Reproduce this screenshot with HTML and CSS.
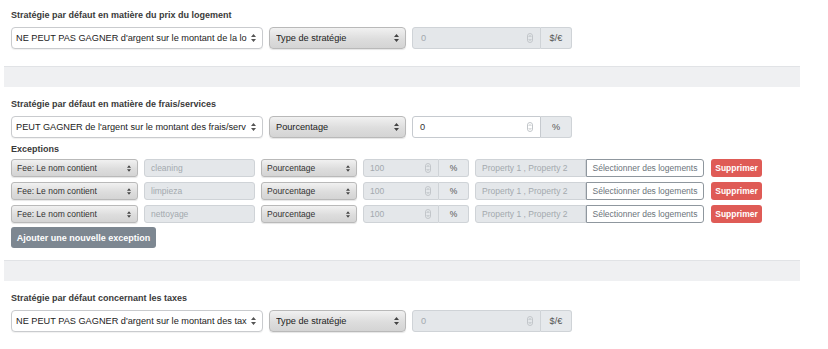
FILE: index.html
```html
<!DOCTYPE html>
<html lang="fr">
<head>
<meta charset="utf-8">
<title>Stratégies</title>
<link rel="stylesheet" href="styles.css">
</head>
<body>
<div class="page">
  <section class="section first">
    <h3 class="title">Stratégie par défaut en matière du prix du logement</h3>
    <div class="row">
      <div class="sel sel-white w-main">
        <span class="sel-text">NE PEUT PAS GAGNER d'argent sur le montant de la lo</span>
        <svg class="arr" width="5" height="8" viewBox="0 0 5 8"><path d="M2.5 0 L5 3 H0 Z M2.5 8 L5 5 H0 Z" fill="#555"/></svg>
      </div>
      <div class="sel sel-gray w-type">
        <span class="sel-text">Type de stratégie</span>
        <svg class="arr" width="5" height="8" viewBox="0 0 5 8"><path d="M2.5 0 L5 3 H0 Z M2.5 8 L5 5 H0 Z" fill="#444"/></svg>
      </div>
      <div class="group w-group">
        <div class="num num-dis">
          <span class="ph">0</span>
          <svg class="spin" width="6" height="10" viewBox="0 0 6 10"><rect x="0.5" y="0.5" width="5" height="9" rx="2.5" fill="none" stroke="#c2c6ca"/><path d="M1.8 3.8 L3 2.6 L4.2 3.8 M1.8 6.2 L3 7.4 L4.2 6.2" fill="none" stroke="#9aa0a6" stroke-width="0.7"/></svg>
        </div>
        <div class="addon">$/€</div>
      </div>
    </div>
  </section>

  <div class="band"></div>

  <section class="section">
    <h3 class="title">Stratégie par défaut en matière de frais/services</h3>
    <div class="row">
      <div class="sel sel-white w-main">
        <span class="sel-text">PEUT GAGNER de l'argent sur le montant des frais/serv</span>
        <svg class="arr" width="5" height="8" viewBox="0 0 5 8"><path d="M2.5 0 L5 3 H0 Z M2.5 8 L5 5 H0 Z" fill="#555"/></svg>
      </div>
      <div class="sel sel-gray w-type">
        <span class="sel-text">Pourcentage</span>
        <svg class="arr" width="5" height="8" viewBox="0 0 5 8"><path d="M2.5 0 L5 3 H0 Z M2.5 8 L5 5 H0 Z" fill="#444"/></svg>
      </div>
      <div class="group w-group">
        <div class="num num-on">
          <span class="val">0</span>
          <svg class="spin" width="6" height="10" viewBox="0 0 6 10"><rect x="0.5" y="0.5" width="5" height="9" rx="2.5" fill="none" stroke="#c2c6ca"/><path d="M1.8 3.8 L3 2.6 L4.2 3.8 M1.8 6.2 L3 7.4 L4.2 6.2" fill="none" stroke="#9aa0a6" stroke-width="0.7"/></svg>
        </div>
        <div class="addon">%</div>
      </div>
    </div>

    <div class="exc-label">Exceptions</div>

    <div class="exc-list">
      <div class="exc-row">
        <div class="sel sel-gray sm w-fee"><span class="sel-text">Fee: Le nom contient</span><svg class="arr" width="4" height="7" viewBox="0 0 5 8"><path d="M2.5 0 L5 3 H0 Z M2.5 8 L5 5 H0 Z" fill="#444"/></svg></div>
        <div class="txt-dis w-name">cleaning</div>
        <div class="sel sel-gray sm w-pct"><span class="sel-text">Pourcentage</span><svg class="arr" width="4" height="7" viewBox="0 0 5 8"><path d="M2.5 0 L5 3 H0 Z M2.5 8 L5 5 H0 Z" fill="#444"/></svg></div>
        <div class="group sm w-sgroup">
          <div class="num num-dis sm"><span class="ph">100</span><svg class="spin" width="6" height="10" viewBox="0 0 6 10"><rect x="0.5" y="0.5" width="5" height="9" rx="2.5" fill="none" stroke="#c2c6ca"/><path d="M1.8 3.8 L3 2.6 L4.2 3.8 M1.8 6.2 L3 7.4 L4.2 6.2" fill="none" stroke="#9aa0a6" stroke-width="0.7"/></svg></div>
          <div class="addon sm">%</div>
        </div>
        <div class="group sm">
          <div class="txt-dis joined w-prop">Property 1 , Property 2</div>
          <button class="btn-pick">Sélectionner des logements</button>
        </div>
        <button class="btn-del">Supprimer</button>
      </div>
      <div class="exc-row">
        <div class="sel sel-gray sm w-fee"><span class="sel-text">Fee: Le nom contient</span><svg class="arr" width="4" height="7" viewBox="0 0 5 8"><path d="M2.5 0 L5 3 H0 Z M2.5 8 L5 5 H0 Z" fill="#444"/></svg></div>
        <div class="txt-dis w-name">limpieza</div>
        <div class="sel sel-gray sm w-pct"><span class="sel-text">Pourcentage</span><svg class="arr" width="4" height="7" viewBox="0 0 5 8"><path d="M2.5 0 L5 3 H0 Z M2.5 8 L5 5 H0 Z" fill="#444"/></svg></div>
        <div class="group sm w-sgroup">
          <div class="num num-dis sm"><span class="ph">100</span><svg class="spin" width="6" height="10" viewBox="0 0 6 10"><rect x="0.5" y="0.5" width="5" height="9" rx="2.5" fill="none" stroke="#c2c6ca"/><path d="M1.8 3.8 L3 2.6 L4.2 3.8 M1.8 6.2 L3 7.4 L4.2 6.2" fill="none" stroke="#9aa0a6" stroke-width="0.7"/></svg></div>
          <div class="addon sm">%</div>
        </div>
        <div class="group sm">
          <div class="txt-dis joined w-prop">Property 1 , Property 2</div>
          <button class="btn-pick">Sélectionner des logements</button>
        </div>
        <button class="btn-del">Supprimer</button>
      </div>
      <div class="exc-row">
        <div class="sel sel-gray sm w-fee"><span class="sel-text">Fee: Le nom contient</span><svg class="arr" width="4" height="7" viewBox="0 0 5 8"><path d="M2.5 0 L5 3 H0 Z M2.5 8 L5 5 H0 Z" fill="#444"/></svg></div>
        <div class="txt-dis w-name">nettoyage</div>
        <div class="sel sel-gray sm w-pct"><span class="sel-text">Pourcentage</span><svg class="arr" width="4" height="7" viewBox="0 0 5 8"><path d="M2.5 0 L5 3 H0 Z M2.5 8 L5 5 H0 Z" fill="#444"/></svg></div>
        <div class="group sm w-sgroup">
          <div class="num num-dis sm"><span class="ph">100</span><svg class="spin" width="6" height="10" viewBox="0 0 6 10"><rect x="0.5" y="0.5" width="5" height="9" rx="2.5" fill="none" stroke="#c2c6ca"/><path d="M1.8 3.8 L3 2.6 L4.2 3.8 M1.8 6.2 L3 7.4 L4.2 6.2" fill="none" stroke="#9aa0a6" stroke-width="0.7"/></svg></div>
          <div class="addon sm">%</div>
        </div>
        <div class="group sm">
          <div class="txt-dis joined w-prop">Property 1 , Property 2</div>
          <button class="btn-pick">Sélectionner des logements</button>
        </div>
        <button class="btn-del">Supprimer</button>
      </div>
    </div>

    <button class="btn-add">Ajouter une nouvelle exception</button>
  </section>

  <div class="band"></div>

  <section class="section">
    <h3 class="title">Stratégie par défaut concernant les taxes</h3>
    <div class="row">
      <div class="sel sel-white w-main">
        <span class="sel-text">NE PEUT PAS GAGNER d'argent sur le montant des tax</span>
        <svg class="arr" width="5" height="8" viewBox="0 0 5 8"><path d="M2.5 0 L5 3 H0 Z M2.5 8 L5 5 H0 Z" fill="#555"/></svg>
      </div>
      <div class="sel sel-gray w-type">
        <span class="sel-text">Type de stratégie</span>
        <svg class="arr" width="5" height="8" viewBox="0 0 5 8"><path d="M2.5 0 L5 3 H0 Z M2.5 8 L5 5 H0 Z" fill="#444"/></svg>
      </div>
      <div class="group w-group">
        <div class="num num-dis">
          <span class="ph">0</span>
          <svg class="spin" width="6" height="10" viewBox="0 0 6 10"><rect x="0.5" y="0.5" width="5" height="9" rx="2.5" fill="none" stroke="#c2c6ca"/><path d="M1.8 3.8 L3 2.6 L4.2 3.8 M1.8 6.2 L3 7.4 L4.2 6.2" fill="none" stroke="#9aa0a6" stroke-width="0.7"/></svg>
        </div>
        <div class="addon">$/€</div>
      </div>
    </div>
  </section>
</div>
</body>
</html>
```

FILE: styles.css
```css
* { box-sizing: border-box; }

html, body {
  margin: 0;
  padding: 0;
  background: #ffffff;
}

body {
  font-family: "Liberation Sans", Arial, sans-serif;
  color: #333;
}

.page {
  width: 800px;
  padding-left: 4px;
}

.section {
  padding: 11px 7px 12px;
}

.section.first {
  padding-top: 9px;
  padding-bottom: 17px;
}

.title {
  margin: 0 0 6px;
  font-size: 9px;
  line-height: 12px;
  font-weight: bold;
  color: #3a3a3a;
}

.band {
  height: 21px;
  background: #eff0f2;
  border-top: 1px solid #e1e3e6;
}

.row {
  display: flex;
  gap: 6px;
  height: 22px;
}

/* selects */
.sel {
  display: flex;
  align-items: center;
  justify-content: space-between;
  height: 100%;
  padding: 0 6px 0 4px;
  border-radius: 4px;
  font-size: 9.2px;
  white-space: nowrap;
  overflow: hidden;
}

.sel-text {
  overflow: hidden;
  flex: 1;
  color: #222;
}

.arr {
  flex: none;
  margin-left: 3px;
}

.sel-white {
  background: #fff;
  border: 1px solid #c9cbce;
  box-shadow: 0 1px 1px rgba(0,0,0,0.06);
}

.sel-gray {
  background: linear-gradient(#f1f1f1, #dddddd 55%, #d4d4d4);
  border: 1px solid #b9b9b9;
  box-shadow: 0 1px 1px rgba(0,0,0,0.1);
}

.w-main { width: 252px; }
.w-type { width: 137px; padding-left: 6px; }
.w-group { width: 160px; }

/* input group */
.group {
  display: flex;
  height: 100%;
}

.num {
  flex: 1;
  display: flex;
  align-items: center;
  justify-content: space-between;
  padding: 0 7px 0 8px;
  border: 1px solid #cfd3d7;
  border-radius: 3px 0 0 3px;
  font-size: 9.2px;
}

.num-dis { background: #e4e7ea; }
.num-on { background: #fff; border-color: #c6cacf; padding-left: 7px; }

.ph { color: #a3a9ae; }
.val { color: #333; }

.addon {
  width: 31px;
  display: flex;
  align-items: center;
  justify-content: center;
  background: #e6e9ec;
  border: 1px solid #cfd3d7;
  border-left: none;
  border-radius: 0 3px 3px 0;
  font-size: 9.2px;
  color: #555;
}

/* exceptions */
.exc-label {
  margin-top: 5px;
  font-size: 9px;
  line-height: 12px;
  font-weight: bold;
  color: #3a3a3a;
}

.exc-list {
  margin-top: 4px;
  display: flex;
  flex-direction: column;
  gap: 5px;
}

.exc-row {
  display: flex;
  gap: 6px;
  height: 18px;
}

.sel.sm {
  font-size: 8.5px;
  padding: 0 6px 0 5px;
  border-radius: 3px;
}

.sel.sm .sel-text { color: #333; }

.w-fee { width: 127px; }
.w-pct { width: 96px; }
.w-name { width: 111px; }
.w-sgroup { width: 106px; }
.w-prop { width: 111px; }

.txt-dis {
  display: flex;
  align-items: center;
  padding: 0 6px;
  background: #e4e7ea;
  border: 1px solid #cfd3d7;
  border-radius: 3px;
  font-size: 8.5px;
  color: #a3a9ae;
  white-space: nowrap;
}

.txt-dis.joined {
  border-radius: 3px 0 0 3px;
}

.num.sm {
  font-size: 8.5px;
  padding: 0 7px 0 6px;
}

.addon.sm {
  width: 30px;
  font-size: 8.5px;
}

.btn-pick {
  width: 118px;
  height: 100%;
  margin: 0;
  padding: 0;
  background: #fff;
  border: 1px solid #8f979e;
  border-radius: 0 3px 3px 0;
  font-family: inherit;
  font-size: 8.5px;
  color: #6b737a;
  white-space: nowrap;
}

.btn-del {
  margin-left: 1px;
  width: 51px;
  height: 100%;
  padding: 0;
  background: #df5b56;
  border: none;
  border-radius: 3px;
  font-family: inherit;
  font-size: 8.5px;
  font-weight: bold;
  color: #fff;
}

.btn-add {
  display: block;
  margin-top: 4px;
  width: 145px;
  height: 21px;
  padding: 0;
  background: #7d8791;
  border: none;
  border-radius: 3px;
  font-family: inherit;
  font-size: 9px;
  font-weight: bold;
  color: #fff;
}
```
